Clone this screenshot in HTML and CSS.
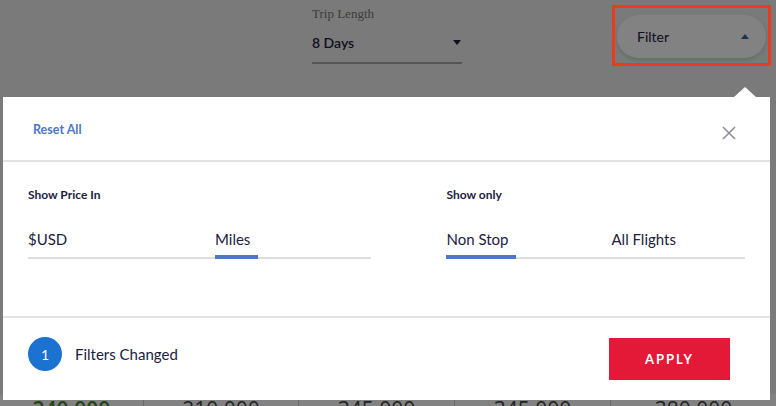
FILE: index.html
```html
<!DOCTYPE html>
<html lang="en">
<head>
  <meta charset="UTF-8" />
  <meta name="viewport" content="width=device-width, initial-scale=1.0">
  <title>Flight Search - Filter</title>
  <link rel="stylesheet" href="styles.css">
</head>
<body>

  <div class="page">
    <div class="topbar">
      <div class="trip-field">
        <div class="trip-label">Trip Length</div>
        <div class="trip-select">
          <span>8 Days</span>
          <span class="caret-down"></span>
        </div>
      </div>
      <div class="filter-pill">
        <span>Filter</span>
        <span class="caret-up"></span>
      </div>
    </div>

    <div class="fares">
      <div class="fare best">240,000</div>
      <div class="fare">210,000</div>
      <div class="fare">345,000</div>
      <div class="fare">345,000</div>
      <div class="fare">380,000</div>
    </div>
  </div>

  <div class="overlay"></div>
  <div class="highlight"></div>

  <div class="popover">
    <div class="pop-header">
      <a href="#" class="reset">Reset All</a>
      <button class="close" title="Close">
        <svg width="14" height="14" viewBox="0 0 14 14">
          <path d="M1 1 L13 13 M13 1 L1 13" stroke="#8a8d94" stroke-width="1.5" fill="none" />
        </svg>
      </button>
    </div>

    <div class="pop-body">
      <div class="group price">
        <div class="group-title">Show Price In</div>
        <div class="tabs">
          <div class="tab"><span>$USD</span></div>
          <div class="tab"><span class="active">Miles</span></div>
        </div>
      </div>
      <div class="group stops">
        <div class="group-title">Show only</div>
        <div class="tabs">
          <div class="tab"><span class="active">Non Stop</span></div>
          <div class="tab"><span>All Flights</span></div>
        </div>
      </div>
    </div>

    <div class="pop-footer">
      <div class="changed">
        <span class="count">1</span>
        <span>Filters Changed</span>
      </div>
      <button class="apply">APPLY</button>
    </div>
  </div>

</body>
</html>
```

FILE: styles.css
```css
body {
  margin: 0;
  padding: 0;
  background-color: #efefef;
  font-family: Lato, "Open Sans", sans-serif;
  color: #1b2140;
  width: 776px;
  height: 406px;
  overflow: hidden;
  position: relative;
}

.topbar {
  display: flex;
  align-items: flex-start;
  padding-left: 312px;
  height: 394px;
}

.trip-field {
  width: 150px;
  padding-top: 6px;
}

.trip-label {
  font-family: "Liberation Serif", serif;
  font-size: 13px;
  color: #777;
}

.trip-select {
  display: flex;
  justify-content: space-between;
  align-items: center;
  font-size: 14px;
  font-weight: 600;
  color: #1b2140;
  margin-top: 12px;
  padding-bottom: 11px;
  border-bottom: 2px solid #a8a8a8;
}

.caret-down {
  width: 0;
  height: 0;
  margin-right: 1px;
  border-left: 4px solid transparent;
  border-right: 4px solid transparent;
  border-top: 5px solid #1b2140;
}

.filter-pill {
  margin-left: 155px;
  margin-top: 15px;
  width: 149px;
  height: 43px;
  box-sizing: border-box;
  border-radius: 22px;
  background: #fff;
  box-shadow: 0 2px 4px rgba(0,0,0,0.15);
  display: flex;
  justify-content: space-between;
  align-items: center;
  padding: 0 17px 0 20px;
  font-size: 14px;
}

.caret-up {
  width: 0;
  height: 0;
  border-left: 4px solid transparent;
  border-right: 4px solid transparent;
  border-bottom: 5px solid #3d5fa8;
}

.fares {
  display: grid;
  grid-template-columns: 143px 155px 156px 156px 1fr;
  background: #fff;
  height: 40px;
}

.fare {
  border-left: 1px solid #ccc;
  text-align: center;
  font-family: "Open Sans", sans-serif;
  font-size: 21px;
  padding-top: 1px;
  color: #444;
}

.fare.best {
  border-left: none;
  color: #3c8a2e;
  font-weight: 600;
}

.overlay {
  position: absolute;
  inset: 0;
  background: rgba(0,0,0,0.49);
}

.highlight {
  position: absolute;
  left: 612px;
  top: 5px;
  width: 153px;
  height: 55px;
  border: 3px solid #ec3a1c;
}

.popover {
  position: absolute;
  left: 3px;
  top: 97px;
  width: 767px;
  height: 303px;
  background: #fff;
  display: flex;
  flex-direction: column;
}

.popover::before {
  content: "";
  position: absolute;
  top: -10px;
  left: 731px;
  border-left: 11px solid transparent;
  border-right: 11px solid transparent;
  border-bottom: 10px solid #fff;
}

.pop-header {
  height: 63px;
  display: flex;
  justify-content: space-between;
  align-items: center;
  padding: 0 34px 0 30px;
  border-bottom: 2px solid #e3e3e3;
}

.reset {
  font-size: 12.5px;
  font-weight: 700;
  color: #4b78c0;
  text-decoration: none;
  margin-top: 1px;
}

.close {
  background: none;
  border: none;
  padding: 0;
  cursor: pointer;
  display: flex;
  margin-top: 9px;
}

.pop-body {
  height: 154px;
  display: flex;
  gap: 75px;
  padding: 0 25px;
}

.group {
  padding-top: 25px;
}

.group.price {
  width: 344px;
}

.group.stops {
  width: 299px;
}

.group-title {
  font-size: 12px;
  font-weight: 700;
  color: #1b2140;
  height: 14px;
}

.tabs {
  display: grid;
  margin-top: 28px;
  border-bottom: 2px solid #dedede;
}

.price .tabs {
  grid-template-columns: 187px 1fr;
}

.stops .tabs {
  grid-template-columns: 165px 1fr;
}

.tab span {
  display: inline-block;
  font-size: 15px;
  color: #1b2140;
  padding: 0 8px 7px 0;
  margin-bottom: -2px;
  border-bottom: 4px solid transparent;
}

.tab span.active {
  border-bottom-color: #4c79c3;
}

.pop-footer {
  flex: 1;
  border-top: 2px solid #e3e3e3;
  display: flex;
  justify-content: space-between;
  align-items: center;
  padding: 0 40px 0 25px;
}

.changed {
  display: flex;
  align-items: center;
  gap: 13px;
  font-size: 15px;
  color: #1b2140;
  margin-top: -10px;
}

.count {
  width: 34px;
  height: 34px;
  border-radius: 50%;
  background: #1b72d0;
  color: #fff;
  font-size: 14px;
  display: flex;
  justify-content: center;
  align-items: center;
}

.apply {
  width: 121px;
  height: 42px;
  background: #e31937;
  color: #fff;
  border: none;
  font-family: Lato, sans-serif;
  font-size: 13px;
  font-weight: 700;
  letter-spacing: 2px;
  cursor: pointer;
}
```
